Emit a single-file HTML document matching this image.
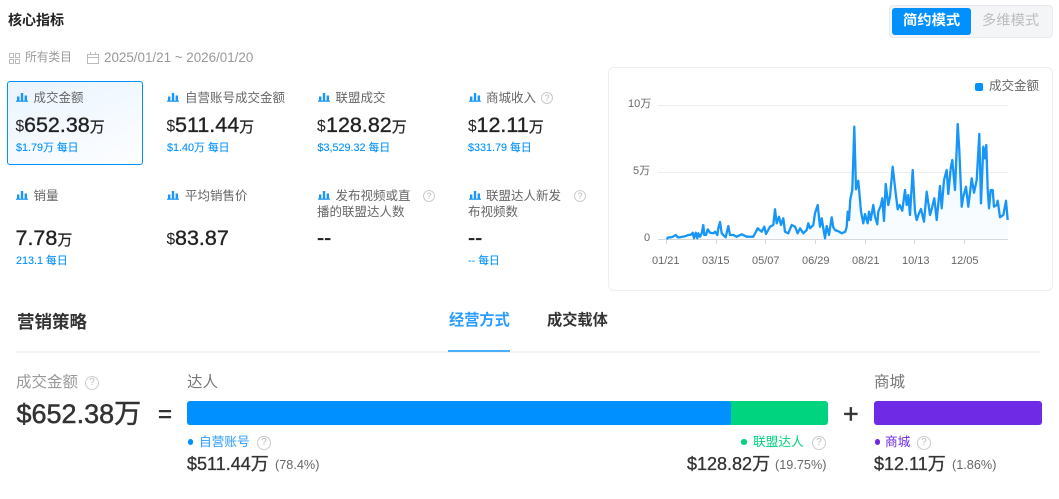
<!DOCTYPE html>
<html lang="zh-CN"><head><meta charset="utf-8"><title>核心指标</title>
<style>
html,body{margin:0;padding:0;background:#fff;width:1059px;height:499px;overflow:hidden}
body{position:relative;font-family:"Liberation Sans","Noto Sans CJK SC",sans-serif}
.a{position:absolute}
.t{position:absolute;white-space:nowrap;line-height:1}
.lb{font-size:12.5px;color:#666}
.num{font-size:21.5px;color:#222;-webkit-text-stroke:.35px #222}
.num i{font-style:normal;font-size:15px;-webkit-text-stroke:.2px #222}
.cur{font-size:15.5px;color:#222}
.d{font-size:10.8px;color:#0090ff;-webkit-text-stroke:.1px #0090ff}
.q{position:absolute;width:10px;height:10px;border:1px solid #ccc;border-radius:50%;color:#bbb;font-size:9px;line-height:10px;text-align:center}
.q.l{width:12px;height:12px;line-height:12px;font-size:10px;border-width:1.2px}
.dot{position:absolute;width:5.5px;height:5.5px;border-radius:50%}
.v{font-size:18px;color:#333;-webkit-text-stroke:.3px #333}
.p{font-size:12.7px;color:#666}
.ax{font-size:11px;color:#666}
</style></head><body>
<svg width="0" height="0" style="position:absolute"><defs><g id="b" fill="#1c97f5"><rect x="0" y="7.6" width="12" height="1.2"/><rect x="1" y="3.5" width="2.4" height="4.5"/><rect x="4.8" y="0" width="2.4" height="8"/><rect x="8.6" y="2.5" width="2.4" height="5.5"/></g></defs></svg>

<div class="t" style="left:8px;top:13px;font-size:14px;font-weight:700;color:#222">核心指标</div>
<svg class="a" style="left:9px;top:53px" width="11" height="11" fill="none" stroke="#bbb"><rect x=".5" y=".5" width="4" height="4"/><rect x="6.5" y=".5" width="4" height="4"/><rect x=".5" y="6.5" width="4" height="4"/><rect x="6.5" y="6.5" width="4" height="4"/></svg>
<div class="t" style="left:25px;top:52px;font-size:11.7px;color:#999">所有类目</div>
<svg class="a" style="left:87px;top:52px" width="13" height="12" fill="none" stroke="#bbb"><rect x=".5" y="2.5" width="11" height="9"/><path d="M.5 5.5h11M3.5 0v3M8.5 0v3"/></svg>
<div class="t" style="left:104px;top:51px;font-size:13.4px;color:#999">2025/01/21 ~ 2026/01/20</div>

<div class="a" style="left:889px;top:5px;width:162px;height:31px;background:#f3f5f7;border:1px solid #e9ebef;border-radius:4px"></div>
<div class="a" style="left:892px;top:8px;width:79px;height:27px;background:#0090ff;border-radius:3px"></div>
<div class="t" style="left:903px;top:14px;font-size:14.3px;font-weight:700;color:#fff">简约模式</div>
<div class="t" style="left:982px;top:14px;font-size:14.3px;color:#bdbdbd">多维模式</div>

<div class="a" style="left:7px;top:81px;width:134px;height:82px;border:1px solid #0090ff;border-radius:3px;background:linear-gradient(160deg,#eaf4ff,#fbfdff 90%)"></div>

<svg class="a" style="left:16px;top:93px" width="12" height="9"><use href="#b"/></svg>
<div class="t lb" style="left:33.5px;top:92px">成交金额</div>
<div class="t cur" style="left:15.5px;top:119px">$</div>
<div class="t num" style="left:24px;top:115px">652.38<i>万</i></div>
<div class="t d" style="left:16px;top:143px">$1.79万 每日</div>

<svg class="a" style="left:167px;top:93px" width="12" height="9"><use href="#b"/></svg>
<div class="t lb" style="left:185px;top:92px">自营账号成交金额</div>
<div class="t cur" style="left:166.5px;top:119px">$</div>
<div class="t num" style="left:175px;top:115px">511.44<i>万</i></div>
<div class="t d" style="left:167px;top:143px">$1.40万 每日</div>

<svg class="a" style="left:318px;top:93px" width="12" height="9"><use href="#b"/></svg>
<div class="t lb" style="left:335.5px;top:92px">联盟成交</div>
<div class="t cur" style="left:317px;top:119px">$</div>
<div class="t num" style="left:326px;top:115px">128.82<i>万</i></div>
<div class="t d" style="left:317.5px;top:143px">$3,529.32 每日</div>

<svg class="a" style="left:469px;top:93px" width="12" height="9"><use href="#b"/></svg>
<div class="t lb" style="left:486px;top:92px">商城收入</div>
<div class="q" style="left:541px;top:92px">?</div>
<div class="t cur" style="left:468px;top:119px">$</div>
<div class="t num" style="left:476.5px;top:115px">12.11<i>万</i></div>
<div class="t d" style="left:468px;top:143px">$331.79 每日</div>

<svg class="a" style="left:16px;top:191px" width="12" height="9"><use href="#b"/></svg>
<div class="t lb" style="left:33.5px;top:190px">销量</div>
<div class="t num" style="left:15.5px;top:228px">7.78<i>万</i></div>
<div class="t d" style="left:16px;top:256px">213.1 每日</div>

<svg class="a" style="left:167px;top:191px" width="12" height="9"><use href="#b"/></svg>
<div class="t lb" style="left:185px;top:190px">平均销售价</div>
<div class="t cur" style="left:166.5px;top:232px">$</div>
<div class="t num" style="left:175px;top:228px">83.87</div>

<svg class="a" style="left:318px;top:191px" width="12" height="9"><use href="#b"/></svg>
<div class="t lb" style="left:335.5px;top:190px">发布视频或直</div>
<div class="t lb" style="left:317px;top:206px">播的联盟达人数</div>
<div class="q" style="left:423px;top:190px">?</div>
<div class="t num" style="left:317px;top:228px">--</div>

<svg class="a" style="left:469px;top:191px" width="12" height="9"><use href="#b"/></svg>
<div class="t lb" style="left:486px;top:190px">联盟达人新发</div>
<div class="t lb" style="left:468px;top:206px">布视频数</div>
<div class="q" style="left:574px;top:190px">?</div>
<div class="t num" style="left:468px;top:228px">--</div>
<div class="t d" style="left:468px;top:256px">-- 每日</div>

<div class="a" style="left:608px;top:67px;width:443px;height:222px;border:1px solid #eeeeee;border-radius:6px"></div>
<div class="a" style="left:975px;top:83px;width:8px;height:8px;background:#0090ff;border-radius:2px"></div>
<div class="t lb" style="left:989px;top:80px">成交金额</div>
<div class="t ax" style="left:628px;top:99px">10万</div>
<div class="t ax" style="left:633px;top:166px">5万</div>
<div class="t ax" style="left:644px;top:233px">0</div>
<div class="t ax" style="left:652px;top:256px">01/21</div>
<div class="t ax" style="left:702px;top:256px">03/15</div>
<div class="t ax" style="left:752px;top:256px">05/07</div>
<div class="t ax" style="left:802px;top:256px">06/29</div>
<div class="t ax" style="left:852px;top:256px">08/21</div>
<div class="t ax" style="left:902px;top:256px">10/13</div>
<div class="t ax" style="left:951px;top:256px">12/05</div>
<svg class="a" style="left:0;top:0" width="1059" height="499" viewBox="0 0 1059 499" fill="none">
<defs><linearGradient id="g" x1="0" y1="0" x2="0" y2="1"><stop offset="0" stop-color="#0090ff" stop-opacity=".08"/><stop offset="1" stop-color="#0090ff" stop-opacity=".02"/></linearGradient></defs>
<path d="M658 105.5H1008M658 172.5H1008" stroke="#eeeeee"/>
<path d="M658 239.5H1008" stroke="#d8d8d8"/>
<path d="M666.5 240v4M716.5 240v4M765.5 240v4M815.5 240v4M865.5 240v4M914.5 240v4M964.5 240v4" stroke="#d8d8d8"/>
<path fill="url(#g)" d="M666.7 239.3L668 237.5 671 237.3 673 236.7 675.7 235 677.7 237.3 680 237.3 685 236.3 688.3 235 691 234.7 692.7 232.7 694 238.3 695.7 232.7 697.3 238.3 698.3 233.3 700 236.7 701.7 233.3 703.3 225 704.3 235 706 235 707.7 229.3 710 232.7 713.3 233.3 715 231.7 717.3 235 718.3 228.3 720 222 721.7 233.3 723.3 235 725.7 237.3 728.3 226 730 235 733.3 235 736.7 236.7 741.7 234.3 746.7 236.7 753.3 236.7 757.7 228.3 761.7 231.7 764.3 226.7 766 234 770 226.7 773.3 225 775 209.3 776.7 223.3 779 216.7 781 225 783.3 218.3 785 231.7 788.3 233.3 791.7 225 795 226.7 797.7 233.3 800 228.3 803.3 233.3 806.7 230 808.3 223.3 810 228.3 813.3 225 815 213.3 817.7 205 820 226.7 821.7 218.3 825 238.3 826.7 226 829 235 831.7 217.3 833.3 227.3 835 230 838.3 231.3 841.7 233.3 845.3 231.7 846.7 226.7 847.7 211.7 849 220 850.3 199.3 852.3 190 854.3 126.7 856 189.3 858.3 180.7 861 211.7 863.3 223.3 865 214 867.7 223.3 869 211.7 870.7 220 873.3 205 875 216.7 877.3 224.3 878.3 211.7 881 205 882.3 198.3 884 221 885.7 184 888.3 205 890 196.7 892.7 166.7 895.7 193.3 897.7 209.3 899.7 205 902.3 210.7 905 190 906.7 205 908.3 195 910 215 912.7 170 915 211.7 916.7 220 919 213.3 921 209 924 221.7 926.7 191.7 930 215 931.7 209 934.3 198.3 936.7 220 940 186 941.7 208.3 944 180 946.7 170 948.3 194 950.7 168.3 952.3 160 955 190 957.7 124 959.3 150 961.7 206.7 963.3 196.7 966 186.7 968.3 206.7 971.7 178.3 974 192.7 976.7 180 979.3 134 981 203.3 983.3 146.7 985 158.3 986.3 145 987.7 189.3 989 208.3 990.7 190 992.7 190 994 206.7 996.7 205 997.7 200.7 1000 217.3 1003.3 215 1006 200.7 1007.7 220 L1007.7 239 L666.7 239Z"/>
<path stroke="#1796f7" stroke-width="2.3" stroke-linejoin="round" d="M666.7 239.3L668 237.5 671 237.3 673 236.7 675.7 235 677.7 237.3 680 237.3 685 236.3 688.3 235 691 234.7 692.7 232.7 694 238.3 695.7 232.7 697.3 238.3 698.3 233.3 700 236.7 701.7 233.3 703.3 225 704.3 235 706 235 707.7 229.3 710 232.7 713.3 233.3 715 231.7 717.3 235 718.3 228.3 720 222 721.7 233.3 723.3 235 725.7 237.3 728.3 226 730 235 733.3 235 736.7 236.7 741.7 234.3 746.7 236.7 753.3 236.7 757.7 228.3 761.7 231.7 764.3 226.7 766 234 770 226.7 773.3 225 775 209.3 776.7 223.3 779 216.7 781 225 783.3 218.3 785 231.7 788.3 233.3 791.7 225 795 226.7 797.7 233.3 800 228.3 803.3 233.3 806.7 230 808.3 223.3 810 228.3 813.3 225 815 213.3 817.7 205 820 226.7 821.7 218.3 825 238.3 826.7 226 829 235 831.7 217.3 833.3 227.3 835 230 838.3 231.3 841.7 233.3 845.3 231.7 846.7 226.7 847.7 211.7 849 220 850.3 199.3 852.3 190 854.3 126.7 856 189.3 858.3 180.7 861 211.7 863.3 223.3 865 214 867.7 223.3 869 211.7 870.7 220 873.3 205 875 216.7 877.3 224.3 878.3 211.7 881 205 882.3 198.3 884 221 885.7 184 888.3 205 890 196.7 892.7 166.7 895.7 193.3 897.7 209.3 899.7 205 902.3 210.7 905 190 906.7 205 908.3 195 910 215 912.7 170 915 211.7 916.7 220 919 213.3 921 209 924 221.7 926.7 191.7 930 215 931.7 209 934.3 198.3 936.7 220 940 186 941.7 208.3 944 180 946.7 170 948.3 194 950.7 168.3 952.3 160 955 190 957.7 124 959.3 150 961.7 206.7 963.3 196.7 966 186.7 968.3 206.7 971.7 178.3 974 192.7 976.7 180 979.3 134 981 203.3 983.3 146.7 985 158.3 986.3 145 987.7 189.3 989 208.3 990.7 190 992.7 190 994 206.7 996.7 205 997.7 200.7 1000 217.3 1003.3 215 1006 200.7 1007.7 220"/>
</svg>

<div class="t" style="left:17px;top:314px;font-size:17.5px;font-weight:700;color:#333">营销策略</div>
<div class="t" style="left:449px;top:313px;font-size:15.2px;font-weight:700;color:#2a9dff">经营方式</div>
<div class="t" style="left:547px;top:313px;font-size:15.2px;font-weight:700;color:#333">成交载体</div>
<div class="a" style="left:16px;top:351px;width:1025px;height:2px;background:#f4f4f4"></div>
<div class="a" style="left:448px;top:350px;width:62px;height:2px;background:#4aaeff"></div>

<div class="t" style="left:16px;top:375px;font-size:15.5px;color:#999">成交金额</div>
<div class="q l" style="left:85px;top:376px">?</div>
<div class="t" style="left:16.5px;top:401px;font-size:27px;color:#333;-webkit-text-stroke:.5px #333">$652.38万</div>
<div class="t" style="left:158px;top:403px;font-size:24px;color:#333;-webkit-text-stroke:.5px #333">=</div>
<div class="t" style="left:843px;top:401px;font-size:27px;color:#333;-webkit-text-stroke:.4px #333">+</div>
<div class="t" style="left:187px;top:375px;font-size:15.5px;color:#777">达人</div>
<div class="a" style="left:187px;top:401px;width:641px;height:24px;background:#00d47e;border-radius:3px"></div>
<div class="a" style="left:187px;top:401px;width:544px;height:24px;background:#0090ff;border-radius:3px"></div>
<div class="t" style="left:874px;top:375px;font-size:15.5px;color:#777">商城</div>
<div class="a" style="left:874px;top:401px;width:168px;height:24px;background:#6f2ae6;border-radius:3px"></div>

<div class="dot" style="left:187.5px;top:439px;background:#0090ff"></div>
<div class="t" style="left:199px;top:436px;font-size:12.7px;color:#2a9dff">自营账号</div>
<div class="q l" style="left:257px;top:436px">?</div>
<div class="t v" style="left:187px;top:455px">$511.44万</div>
<div class="t p" style="left:275px;top:459px">(78.4%)</div>

<div class="dot" style="left:741px;top:439px;background:#00d47e"></div>
<div class="t" style="left:753px;top:436px;font-size:12.7px;color:#00d47e">联盟达人</div>
<div class="q l" style="left:812px;top:436px">?</div>
<div class="t v" style="left:687px;top:455px">$128.82万</div>
<div class="t p" style="left:775px;top:459px">(19.75%)</div>

<div class="dot" style="left:874.5px;top:439px;background:#6f2ae6"></div>
<div class="t" style="left:885px;top:436px;font-size:12.7px;color:#6f2ae6">商城</div>
<div class="q l" style="left:917px;top:436px">?</div>
<div class="t v" style="left:874px;top:455px">$12.11万</div>
<div class="t p" style="left:952px;top:459px">(1.86%)</div>
</body></html>
